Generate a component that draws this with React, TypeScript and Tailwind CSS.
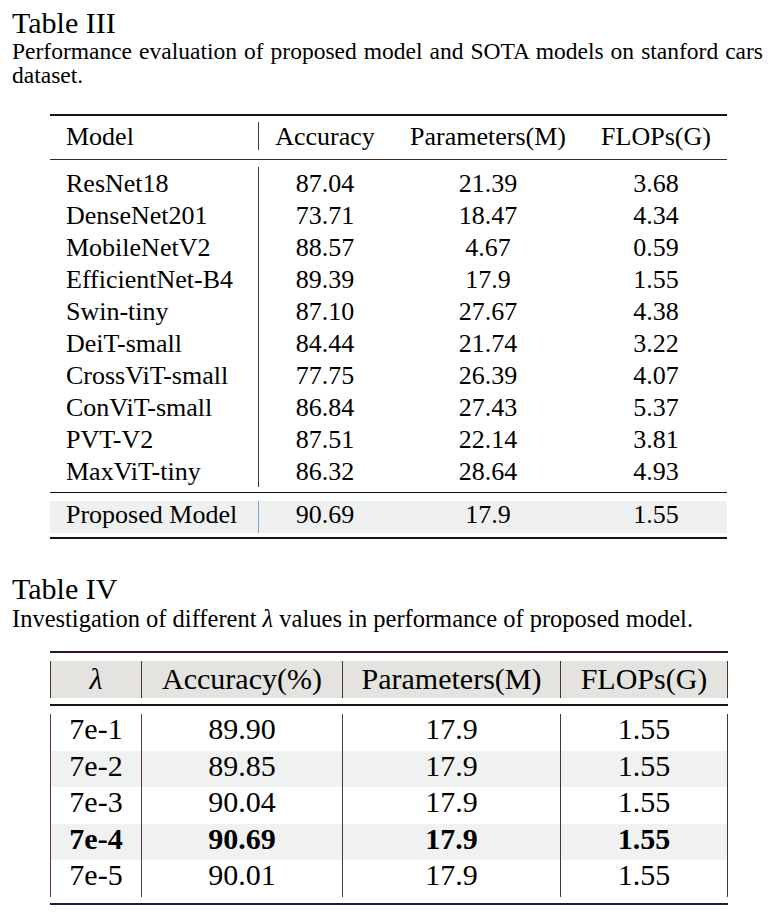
import React from 'react';

const models: [string, string, string, string][] = [
  ['ResNet18', '87.04', '21.39', '3.68'],
  ['DenseNet201', '73.71', '18.47', '4.34'],
  ['MobileNetV2', '88.57', '4.67', '0.59'],
  ['EfficientNet-B4', '89.39', '17.9', '1.55'],
  ['Swin-tiny', '87.10', '27.67', '4.38'],
  ['DeiT-small', '84.44', '21.74', '3.22'],
  ['CrossViT-small', '77.75', '26.39', '4.07'],
  ['ConViT-small', '86.84', '27.43', '5.37'],
  ['PVT-V2', '87.51', '22.14', '3.81'],
  ['MaxViT-tiny', '86.32', '28.64', '4.93'],
];

const lambdas: [string, string, string, string][] = [
  ['7e-1', '89.90', '17.9', '1.55'],
  ['7e-2', '89.85', '17.9', '1.55'],
  ['7e-3', '90.04', '17.9', '1.55'],
  ['7e-4', '90.69', '17.9', '1.55'],
  ['7e-5', '90.01', '17.9', '1.55'],
];

const App: React.FC = () => {
  return (
    <div className="w-[771px] h-[913px] bg-white text-black font-['Liberation_Serif',serif] overflow-hidden">
      {/* Table III */}
      <div className="pl-3 pt-[8px]">
        <div className="text-[30px] leading-[30px]">Table III</div>
        <p className="mt-[1px] w-[751px] text-[23.5px] leading-[24px] text-justify">
          Performance evaluation of proposed model and SOTA models on stanford cars dataset.
        </p>
      </div>

      <div className="ml-[50px] w-[677px] mt-[27px] text-[26px]">
        <div className="h-[2px] bg-[#1c1410]" />
        <div className="flex h-[43px] pb-[3px]">
          <div className="w-[208px] pl-4 flex items-center">Model</div>
          <div className="w-px my-[6px] bg-[#4a3628]" />
          <div className="w-[132px] flex items-center justify-center">Accuracy</div>
          <div className="w-[194px] flex items-center justify-center">Parameters(M)</div>
          <div className="w-[142px] flex items-center justify-center">FLOPs(G)</div>
        </div>
        <div className="h-px bg-[#3a2a20]" />
        <div className="mt-[7px]">
          {models.map(([name, acc, params, flops]) => (
            <div key={name} className="flex h-[32px]">
              <div className="w-[208px] pl-4 flex items-center">{name}</div>
              <div className="w-px bg-[#4a3628]" />
              <div className="w-[132px] flex items-center justify-center">{acc}</div>
              <div className="w-[194px] flex items-center justify-center">{params}</div>
              <div className="w-[142px] flex items-center justify-center">{flops}</div>
            </div>
          ))}
        </div>
        <div className="mt-[5px] h-px bg-[#111]" />
        <div className="mt-[8px] flex h-[32px] pb-[6px] bg-[#eff0f0]">
          <div className="w-[208px] pl-4 flex items-center">Proposed Model</div>
          <div className="w-px -mb-[6px] bg-[#7d9cc8]" />
          <div className="w-[132px] flex items-center justify-center">90.69</div>
          <div className="w-[194px] flex items-center justify-center">17.9</div>
          <div className="w-[142px] flex items-center justify-center">1.55</div>
        </div>
        <div className="mt-[4px] h-[2px] bg-[#1c1410]" />
      </div>

      {/* Table IV */}
      <div className="pl-3 mt-[35px]">
        <div className="text-[30px] leading-[30px]">Table IV</div>
        <p className="mt-[3px] text-[24.5px] leading-[24px]">
          Investigation of different <i>λ</i> values in performance of proposed model.
        </p>
      </div>

      <div className="ml-[50px] w-[678px] mt-[20px] text-[30px]">
        <div className="h-[2px] bg-[#2e1a10]" />
        <div className="mt-[8px] flex h-[37px] bg-[#e4e3df] pb-[2px]">
          <div className="w-[91px] -mb-[2px] border-l border-[#4a3426] flex items-center justify-center pb-[2px]">
            <i>λ</i>
          </div>
          <div className="w-[201px] -mb-[2px] border-l border-[#4a3426] flex items-center justify-center pb-[2px]">Accuracy(%)</div>
          <div className="w-[218px] -mb-[2px] border-l border-[#4a3426] flex items-center justify-center pb-[2px]">Parameters(M)</div>
          <div className="w-[168px] -mb-[2px] border-l border-r border-[#4a3426] flex items-center justify-center pb-[2px]">FLOPs(G)</div>
        </div>
        <div className="mt-[6px] h-[2px] bg-[#1a1410]" />
        <div className="mt-[8px]">
          {lambdas.map(([l, acc, params, flops], i) => (
            <div
              key={l}
              className={
                'flex h-[36.5px] ' +
                (i % 2 === 1 ? 'bg-[#f0f1f1] ' : 'bg-white ') +
                (i === 3 ? 'font-bold' : '')
              }
            >
              <div className="w-[91px] border-l border-[#5a3a28] flex items-center justify-center pb-[7px]">{l}</div>
              <div className="w-[201px] border-l border-[#5a3a28] flex items-center justify-center pb-[7px]">{acc}</div>
              <div className="w-[218px] border-l border-[#3a4052] flex items-center justify-center pb-[7px]">{params}</div>
              <div className="w-[168px] border-l border-r border-[#4a3426] flex items-center justify-center pb-[7px]">{flops}</div>
            </div>
          ))}
        </div>
        <div className="mt-[6px] h-[2px] bg-[#15203a]" />
      </div>
    </div>
  );
};

export default App;
